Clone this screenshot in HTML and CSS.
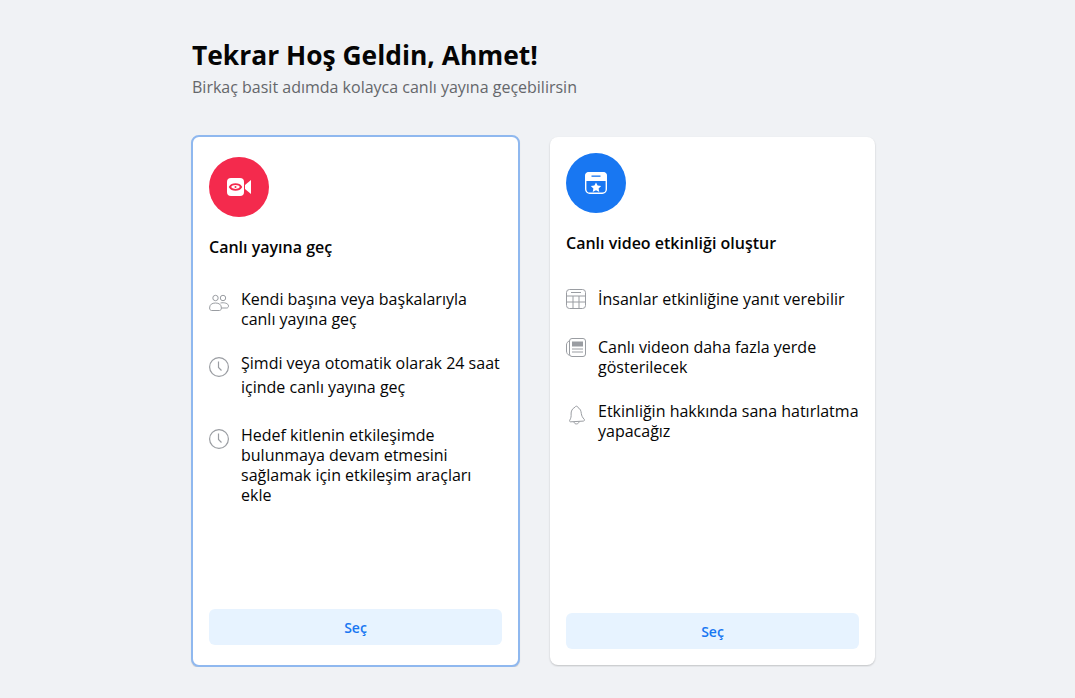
FILE: index.html
```html
<!DOCTYPE html>
<html lang="tr">
<head>
  <meta charset="UTF-8" />
  <title>Canlı yayın</title>
  <link rel="stylesheet" href="styles.css">
</head>
<body>
  <main class="page">
    <h1>Tekrar Hoş Geldin, Ahmet!</h1>
    <p class="subtitle">Birkaç basit adımda kolayca canlı yayına geçebilirsin</p>

    <div class="cards">
      <!-- Go live card -->
      <section class="card card-selected">
        <div class="circle circle-red">
          <svg width="24" height="20" viewBox="0 0 24 20">
            <rect x="0" y="1" width="17" height="18" rx="4" fill="#fff"/>
            <path d="M18 8l6-5v14l-6-5z" fill="#fff"/>
            <path d="M2.800 10c2.200-3.800 9.200-3.800 11.400 0c-2.200 3.800-9.200 3.800-11.400 0z" fill="#fff" stroke="#f42a4d" stroke-width="1.700"/>
            <circle cx="8.500" cy="10" r="1" fill="#f42a4d"/>
          </svg>
        </div>
        <h2>Canlı yayına geç</h2>
        <ul class="list list-selected">
          <li class="row gap-22">
            <svg class="row-icon icon-low" width="20" height="20" viewBox="0 0 20 20" fill="none" stroke="#9a9da2" stroke-width="1">
              <circle cx="6.500" cy="5" r="2.700"/>
              <circle cx="14" cy="5" r="2.700"/>
              <path d="M.6 15c0-3.500 2.400-5 5.900-5s5.900 1.500 5.900 5c0 1.500-.8 2.500-2 2.500h-7.800c-1.200 0-2-1-2-2.500z"/>
              <path d="M11.500 10c3.500-.8 8 .3 8 3c0 1.200-.7 2-1.700 2h-5.300"/>
            </svg>
            <span>Kendi başına veya başkalarıyla canlı yayına geç</span>
          </li>
          <li class="row row-tall gap-26">
            <svg class="row-icon icon-clock" width="20" height="20" viewBox="0 0 20 20" fill="none" stroke="#9a9da2" stroke-width="1.200">
              <circle cx="10" cy="10" r="9.400"/>
              <path d="M9.500 4.500v6l3 3"/>
            </svg>
            <span>Şimdi veya otomatik olarak 24 saat içinde canlı yayına geç</span>
          </li>
          <li class="row">
            <svg class="row-icon icon-low" width="20" height="20" viewBox="0 0 20 20" fill="none" stroke="#9a9da2" stroke-width="1.200">
              <circle cx="10" cy="10" r="9.400"/>
              <path d="M9.500 4.500v6l3 3"/>
            </svg>
            <span>Hedef kitlenin etkileşimde bulunmaya devam etmesini sağlamak için etkileşim araçları ekle</span>
          </li>
        </ul>
        <button class="choose">Seç</button>
      </section>

      <!-- Live video event card -->
      <section class="card">
        <div class="circle circle-blue">
          <svg width="24" height="24" viewBox="0 0 24 24">
            <rect x="1.700" y="1.700" width="20.600" height="20.600" rx="4" fill="none" stroke="#fff" stroke-width="1.400"/>
            <path d="M5 1h14a4 4 0 0 1 4 4v5H1V5a4 4 0 0 1 4-4z" fill="#fff"/>
            <rect x="7.500" y="4.500" width="9" height="1.300" fill="#1877f2"/>
            <path d="M12 11.500l1.600 3.100 3.600.5-2.600 2.400.7 3.500-3.300-1.700-3.300 1.700.7-3.500-2.600-2.400 3.600-.5z" fill="#fff"/>
          </svg>
        </div>
        <h2>Canlı video etkinliği oluştur</h2>
        <ul class="list">
          <li class="row gap-28">
            <svg class="row-icon" width="20" height="20" viewBox="0 0 20 20" fill="none" stroke="#9a9da2" stroke-width="1">
              <rect x=".5" y=".5" width="19" height="19" rx="3"/>
              <path d="M5 3.500h10M.5 7h19M.5 13h19M7 7v12.500M13 7v12.500"/>
            </svg>
            <span>İnsanlar etkinliğine yanıt verebilir</span>
          </li>
          <li class="row gap-24">
            <svg class="row-icon icon-news" width="20" height="20" viewBox="0 0 20 20" fill="none" stroke="#9a9da2" stroke-width="1">
              <rect x="3.500" y=".5" width="16" height="18" rx="2.500"/>
              <path d="M3.500 3C1.500 3.500.5 5 .5 7v6c0 2 1 3.500 3 4.500"/>
              <rect x="6" y="3.500" width="11" height="5" fill="#9a9da2" stroke="none"/>
              <path d="M6 11h11M6 14h11"/>
            </svg>
            <span>Canlı videon daha fazla yerde gösterilecek</span>
          </li>
          <li class="row">
            <svg class="row-icon icon-low" width="20" height="20" viewBox="0 0 20 20" fill="none" stroke="#9a9da2" stroke-width="1">
              <path d="M9 2.200c.5-1.500 2.800-1.300 3 .4c2.500 1.200 3 3.500 3.300 5.800c.3 2.300 1.200 4.200 3 6c.6.8 0 1.600-1 1.700L5 16.800c-1 .2-1.800-.5-1.300-1.500c1.300-2.200 1.600-4 1.400-6.300c-.2-2.800 1.200-5.500 3.900-6.800z"/>
              <path d="M8 17c.3 2.800 5 2.500 5-.5"/>
            </svg>
            <span>Etkinliğin hakkında sana hatırlatma yapacağız</span>
          </li>
        </ul>
        <button class="choose">Seç</button>
      </section>
    </div>
  </main>
</body>
</html>
```

FILE: styles.css
```css
* {
  margin: 0;
  padding: 0;
  box-sizing: border-box;
  font-family: 'Open Sans', sans-serif;
}
body {
  background-color: #f0f2f5;
  color: #050505;
}
.page {
  width: 684px;
  margin-left: 191px;
  padding-top: 37px;
}
h1 {
  font-size: 26.4px;
  font-weight: 700;
  line-height: 36px;
  margin-left: 1px;
}
.subtitle {
  font-size: 16px;
  line-height: 22px;
  color: #65676b;
  margin-left: 1px;
  margin-top: 3px;
}
.cards {
  display: flex;
  align-items: flex-start;
  gap: 30px;
  margin-top: 37px;
}
.card {
  display: flex;
  flex-direction: column;
  width: 325px;
  height: 528px;
  margin-top: 2px;
  padding: 16px;
  background-color: #fff;
  border-radius: 8px;
  box-shadow: 0 1px 2px rgba(0, 0, 0, 0.2);
}
.card-selected {
  width: 329px;
  height: 532px;
  margin-top: 0;
  padding: 20px 16px;
  border: 2px solid #8fb8ef;
  box-shadow: 0 1px 1px rgba(0, 0, 0, 0.15);
}
.circle {
  display: flex;
  align-items: center;
  justify-content: center;
  width: 60px;
  height: 60px;
  border-radius: 50%;
}
.circle-red {
  background-color: #f42a4d;
}
.circle-blue {
  background-color: #1877f2;
}
h2 {
  font-size: 16px;
  font-weight: 600;
  line-height: 20px;
  margin-top: 20px;
}
.list {
  list-style: none;
  flex: 1;
  margin-top: 36px;
}
.list-selected {
  margin-top: 32px;
}
.row {
  display: flex;
  gap: 12px;
  font-size: 16px;
  line-height: 20px;
}
.row-tall {
  line-height: 24px;
}
.gap-22 {
  margin-bottom: 22px;
}
.gap-24 {
  margin-bottom: 24px;
}
.gap-26 {
  margin-bottom: 26px;
}
.gap-28 {
  margin-bottom: 28px;
}
.row-icon {
  flex-shrink: 0;
}
.icon-low {
  margin-top: 4px;
}
.icon-clock {
  margin-top: 6px;
}
.icon-news {
  margin-top: 1px;
}
.choose {
  height: 36px;
  border: none;
  border-radius: 6px;
  background-color: #e7f3ff;
  color: #1877f2;
  font-size: 14px;
  font-weight: 600;
}
```
